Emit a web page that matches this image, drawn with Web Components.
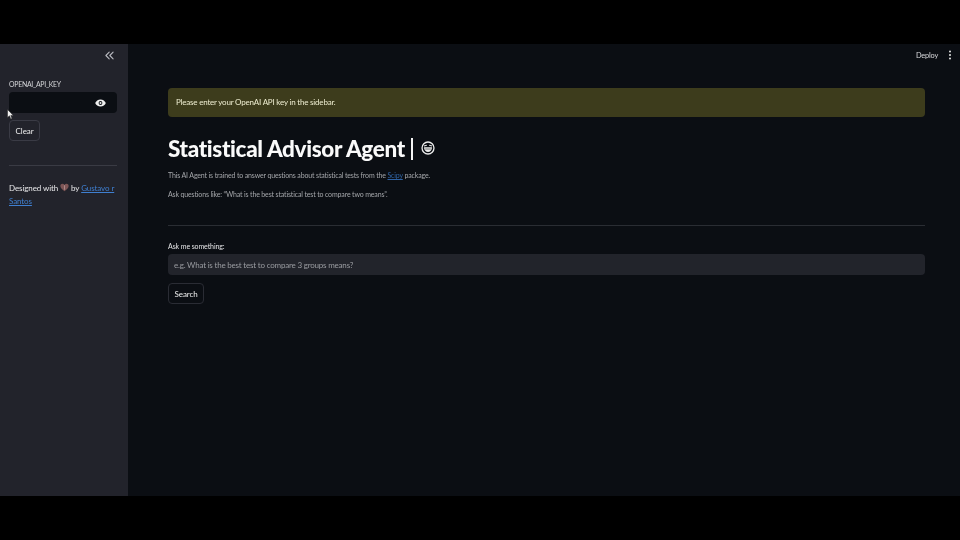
<!DOCTYPE html>
<html>
<head>
<meta charset="utf-8">
<title>Statistical Advisor Agent</title>
<style>
  html, body { margin: 0; height: 100%; background: #000; }
  body { font-family: Lato, "Liberation Sans", sans-serif; color: #fafafa; }
</style>
</head>
<body>
<app-frame>
  <side-bar slot="side">
    <key-field label="OPENAI_API_KEY"></key-field>
    <st-button>Clear</st-button>
    <hr-line></hr-line>
    <p style="margin:0;font-size:8px;letter-spacing:-.1px;line-height:13px;color:#e8e8ea;white-space:nowrap">Designed with<svg width="9" height="9" viewBox="0 0 10 9" style="vertical-align:-1px;margin:0 2.500px 0 1.500px"><path d="M5 8.600C2 6.400.4 4.800.4 2.900.4 1.400 1.500.4 2.800.4 3.700.4 4.500.9 5 1.700 5.500.9 6.300.4 7.200.4 8.500.4 9.600 1.400 9.600 2.900 9.600 4.800 8 6.400 5 8.600Z" fill="#7d5555"/><path d="M5 2v5" stroke="#b09090" stroke-width="1"/></svg>by <a href="#" style="color:#3f7fd0">Gustavo r</a><br><a href="#" style="color:#3f7fd0">Santos</a></p>
  </side-bar>
  <main-panel slot="main">
    <warn-box>Please enter your OpenAI API key in the sidebar.</warn-box>
    <page-title>Statistical Advisor Agent</page-title>
    <small-copy>This AI Agent is trained to answer questions about statistical tests from the <a href="#" style="color:#2f62a3">Scipy</a> package.</small-copy>
    <small-copy>Ask questions like: “What is the best statistical test to compare two means”.</small-copy>
    <hr-line wide></hr-line>
    <ask-field label="Ask me something:" placeholder="e.g. What is the best test to compare 3 groups means?"></ask-field>
    <st-button main>Search</st-button>
  </main-panel>
</app-frame>

<script>
// outer letterbox, sidebar + main
class AppFrame extends HTMLElement {
  constructor() {
    super();
    this.attachShadow({ mode: 'open' }).innerHTML = `
    <style>
      :host { display: block; height: 540px; padding: 44px 0; box-sizing: border-box; background: #000; }
      .wrap { display: grid; grid-template-columns: 128px 1fr; height: 452px; position: relative; filter: blur(.3px); }
      .cursor { position: absolute; left: 7px; top: 65px; }
    </style>
    <div class="wrap">
      <slot name="side"></slot>
      <slot name="main"></slot>
      <svg class="cursor" width="7" height="11" viewBox="0 0 7 11"><path d="M.5.500V8.500L2.500 6.800 3.800 10 5 9.500 3.800 6.400H6.300Z" fill="#f2f2f2" stroke="#222" stroke-width=".5"/></svg>
    </div>`;
  }
}

class SideBar extends HTMLElement {
  constructor() {
    super();
    this.attachShadow({ mode: 'open' }).innerHTML = `
    <style>
      :host { display: block; background: #22232b; padding: 0 11px 0 9px; }
      .top { display: flex; justify-content: flex-end; height: 34px; padding-top: 7px; box-sizing: border-box; }
      svg { margin-right: 3px; }
    </style>
    <div class="top">
      <svg width="9" height="9" viewBox="0 0 9 9" fill="none" stroke="#b9bac0" stroke-width="1.100" stroke-linecap="round" stroke-linejoin="round"><path d="M4.200 1.200.9 4.500l3.300 3.300M8.100 1.200 4.800 4.500l3.300 3.300"/></svg>
    </div>
    <slot></slot>`;
  }
}

class MainPanel extends HTMLElement {
  constructor() {
    super();
    this.attachShadow({ mode: 'open' }).innerHTML = `
    <style>
      :host { display: block; background: #0b0e13; position: relative; padding: 44px 35px 0 40px; }
      .bar { position: absolute; top: 6px; right: 7px; display: flex; align-items: center; gap: 9px; font-size: 7.400px; letter-spacing: -.2px; color: #d8d9dc; }
      .bar svg { display: block; }
    </style>
    <div class="bar">
      <span>Deploy</span>
      <svg width="6" height="10" viewBox="0 0 6 10" fill="#e6e6e6"><circle cx="3" cy="1.500" r="1"/><circle cx="3" cy="5" r="1"/><circle cx="3" cy="8.500" r="1"/></svg>
    </div>
    <slot></slot>`;
  }
}

class WarnBox extends HTMLElement {
  constructor() {
    super();
    this.attachShadow({ mode: 'open' }).innerHTML = `
    <style>
      :host { display: flex; align-items: center; height: 29px; box-sizing: border-box; padding: 0 8px 1px; border-radius: 4px; background: #3d3c1c; color: #eeedd0; font-size: 8px; letter-spacing: -.2px; }
    </style><slot></slot>`;
  }
}

class PageTitle extends HTMLElement {
  constructor() {
    super();
    this.attachShadow({ mode: 'open' }).innerHTML = `
    <style>
      :host { display: flex; align-items: center; height: 34px; margin-top: 14px; font-size: 22.500px; letter-spacing: -.35px; font-weight: 900; color: #fafafa; white-space: nowrap; }
      .pipe { width: 2px; height: 22px; margin: 2px 7.500px 0 6.500px; background: #f4f4f4; }
      svg { display: block; }
    </style>
    <slot></slot>
    <span class="pipe"></span>
    <svg width="14" height="14" viewBox="0 0 15 15">
      <circle cx="7.500" cy="7.500" r="6.400" fill="none" stroke="#ececec" stroke-width="1.400"/>
      <path d="M3.200 5.300 6.200 4.600M11.800 5.300 8.800 4.600" stroke="#ececec" stroke-width="1.200" fill="none"/>
      <path d="M3.200 6.800H11.800C11.600 10.200 9.800 11.800 7.500 11.800S3.400 10.200 3.200 6.800Z" fill="#ececec"/>
      <path d="M4.500 8.600H10.500" stroke="#555" stroke-width=".9"/>
    </svg>`;
  }
}

class SmallCopy extends HTMLElement {
  constructor() {
    super();
    this.attachShadow({ mode: 'open' }).innerHTML = `
    <style>
      :host { display: block; font-size: 7px; letter-spacing: -.15px; line-height: 10px; color: #a4a6aa; margin-top: 9px; }
      :host(:first-of-type) { margin-top: 5px; }
    </style><slot></slot>`;
  }
}

class HrLine extends HTMLElement {
  constructor() {
    super();
    this.attachShadow({ mode: 'open' }).innerHTML = `
    <style>
      :host { display: block; height: 1px; background: #3a3b44; margin: 24px 0 16px; }
      :host([wide]) { background: #2a2d33; margin: 26px 0 15px; }
    </style>`;
  }
}

class KeyField extends HTMLElement {
  constructor() {
    super();
    this.attachShadow({ mode: 'open' }).innerHTML = `
    <style>
      :host { display: block; }
      label { display: block; font-size: 6.900px; letter-spacing: -.25px; line-height: 10px; color: #d5d6d9; margin: 1px 0 3px; }
      .box { display: flex; align-items: center; justify-content: flex-end; height: 21px; background: #0b0e13; border-radius: 4px; padding: 0 11px; }
      svg { display: block; }
    </style>
    <label>${this.getAttribute('label')}</label>
    <div class="box">
      <svg width="11" height="8" viewBox="0 0 11 8"><path d="M5.500.400C3 .400 1 1.900.200 4 1 6.100 3 7.600 5.500 7.600S10 6.100 10.800 4C10 1.900 8 .400 5.500.400Z" fill="#eee"/><circle cx="5.500" cy="4" r="1.900" fill="#0b0e13"/><circle cx="5.500" cy="4" r="1" fill="#eee"/></svg>
    </div>`;
  }
}

class AskField extends HTMLElement {
  constructor() {
    super();
    this.attachShadow({ mode: 'open' }).innerHTML = `
    <style>
      :host { display: block; }
      label { display: block; font-size: 7px; letter-spacing: -.1px; line-height: 10px; color: #e4e4e6; margin-bottom: 3px; }
      input { display: block; width: 100%; box-sizing: border-box; height: 21px; border: 0; outline: 0; border-radius: 4px; background: #22242b; padding: 0 6px; color: #fafafa; font: 8px Lato, "Liberation Sans", sans-serif; letter-spacing: -.2px; }
      input::placeholder { color: #9a9ca1; opacity: 1; }
    </style>
    <label>${this.getAttribute('label')}</label>
    <input placeholder="${this.getAttribute('placeholder')}">`;
  }
}

class StButton extends HTMLElement {
  constructor() {
    super();
    this.attachShadow({ mode: 'open' }).innerHTML = `
    <style>
      :host { display: block; width: max-content; margin-top: 7px; }
      button { display: block; height: 21px; padding: 0 5.500px; border: 1px solid #3a3b45; border-radius: 4px; background: transparent; color: #eeeeee; font: 8px Lato, "Liberation Sans", sans-serif; letter-spacing: -.05px; }
      :host([main]) { margin-top: 8px; }
      :host([main]) button { padding: 0 5.500px; border-color: #2a2c34; background: #0b0e13; }
    </style>
    <button><slot></slot></button>`;
  }
}

customElements.define('app-frame', AppFrame);
customElements.define('side-bar', SideBar);
customElements.define('main-panel', MainPanel);
customElements.define('warn-box', WarnBox);
customElements.define('page-title', PageTitle);
customElements.define('small-copy', SmallCopy);
customElements.define('hr-line', HrLine);
customElements.define('key-field', KeyField);
customElements.define('ask-field', AskField);
customElements.define('st-button', StButton);
</script>
</body>
</html>
